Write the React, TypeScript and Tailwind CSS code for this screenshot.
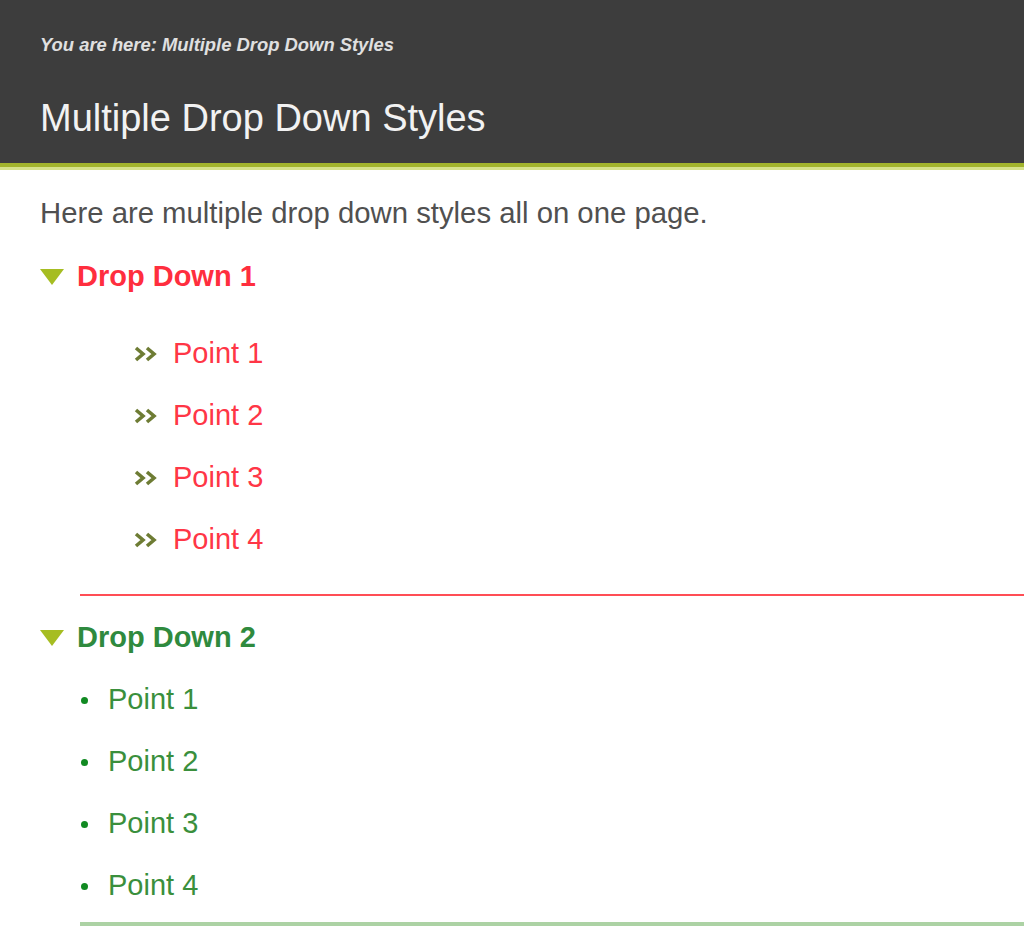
import React from 'react'

const font = { fontFamily: '"Liberation Sans", Arial, sans-serif' }

function Triangle() {
  return (
    <svg width="24" height="18" viewBox="0 0 24 18" className="shrink-0">
      <polygon points="0,1 24,1 12,17" fill="#a6bd22" />
    </svg>
  )
}

function Chevrons() {
  return (
    <svg width="24" height="16" viewBox="0 0 24 16" className="shrink-0">
      <polyline points="2,2 9,8 2,14" fill="none" stroke="#6e7c34" strokeWidth="3.6" />
      <polyline points="13,2 20,8 13,14" fill="none" stroke="#6e7c34" strokeWidth="3.6" />
    </svg>
  )
}

const points = ['Point 1', 'Point 2', 'Point 3', 'Point 4']

export default function App() {
  return (
    <div className="min-h-[935px] bg-white overflow-hidden" style={font}>
      {/* header */}
      <div className="bg-[#3d3d3d] px-[40px] pt-[30px] pb-[23px]">
        <div className="text-[18.4px] leading-[30px] italic font-bold text-[#e0e0e0]">
          You are here: Multiple Drop Down Styles
        </div>
        <h1 className="mt-[36px] text-[38px] leading-[44px] text-[#f2f2f2]">
          Multiple Drop Down Styles
        </h1>
      </div>
      <div className="h-[4px] bg-[#a2b42c]" />
      <div className="h-[3px] bg-[#d6e28c]" />

      {/* content */}
      <div className="pl-[40px]">
        <p className="mt-[25px] text-[29.3px] leading-[36px] text-[#505050]">
          Here are multiple drop down styles all on one page.
        </p>

        {/* drop down 1 */}
        <div className="mt-[28px] flex items-center gap-[13px] h-[36px]">
          <Triangle />
          <span className="text-[29px] font-bold text-[#ff2e3e]">Drop Down 1</span>
        </div>
        <ul className="mt-[28px] pl-[94px]">
          {points.map((p) => (
            <li key={p} className="h-[62px] flex items-center gap-[15px]">
              <Chevrons />
              <span className="text-[29px] text-[#ff3646]">{p}</span>
            </li>
          ))}
        </ul>
        <div className="mt-[23px] ml-[40px] h-[2px] bg-[#ff4d55]" />

        {/* drop down 2 */}
        <div className="mt-[24px] flex items-center gap-[13px] h-[36px]">
          <Triangle />
          <span className="text-[29px] font-bold text-[#2f8a3e]">Drop Down 2</span>
        </div>
        <ul className="mt-[13px] pl-[41px]">
          {points.map((p) => (
            <li key={p} className="h-[62px] flex items-center gap-[20px]">
              <span className="w-[7px] h-[7px] rounded-full bg-[#118a22]" />
              <span className="text-[29px] text-[#3a8f3c]">{p}</span>
            </li>
          ))}
        </ul>
        <div className="mt-[5px] ml-[40px] h-[4px] bg-[#acd2a4]" />
      </div>
    </div>
  )
}
